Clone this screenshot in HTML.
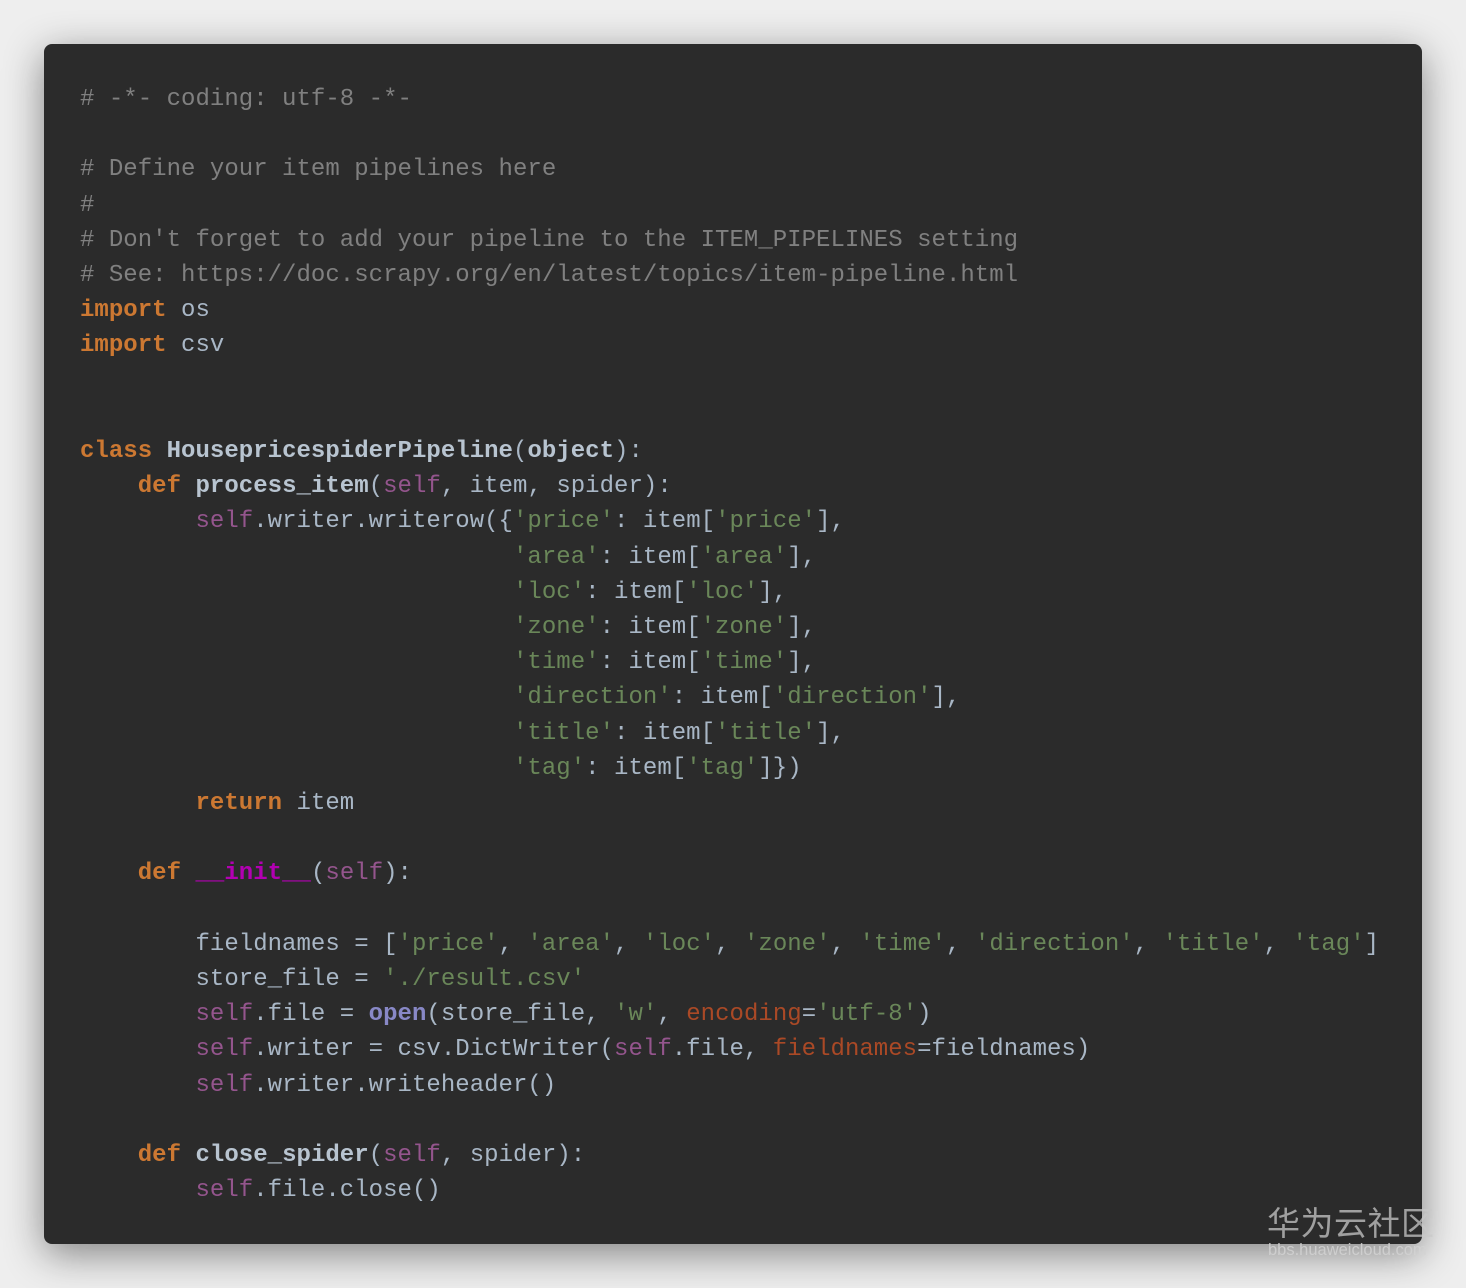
<!DOCTYPE html>
<html><head><meta charset="utf-8"><style>
html,body{margin:0;padding:0;width:1466px;height:1288px;background:#eeeeee;overflow:hidden}
.card{position:absolute;left:44px;top:44px;width:1378px;height:1200px;background:#2b2b2b;border-radius:8px;box-shadow:0 10px 40px rgba(0,0,0,.45)}
pre{position:absolute;left:80px;top:82px;margin:0;font-family:"Liberation Mono","DejaVu Sans Mono",monospace;font-size:24px;line-height:35.2px;color:#a9b7c6;letter-spacing:0.03px}
.c{color:#808080}.k{color:#cc7832;font-weight:bold}.s{color:#6a8759}.f{color:#94558d}.b{font-weight:bold;color:#b8c4d0}.m{color:#b200b2;font-weight:bold}.o{color:#8888c6;font-weight:bold}.p{color:#aa4926}
.wm{position:absolute;left:1267px;top:1203px;font-family:"Noto Sans CJK SC",sans-serif;font-size:33px;color:rgba(200,200,200,.75);line-height:36px;letter-spacing:0.5px}
.wm2{position:absolute;left:1268px;top:1241px;font-family:"Liberation Sans",sans-serif;font-size:16.5px;color:rgba(210,210,210,.85)}
</style></head><body>
<div class="card"></div>
<pre><span class="c"># -*- coding: utf-8 -*-</span>

<span class="c"># Define your item pipelines here</span>
<span class="c">#</span>
<span class="c"># Don't forget to add your pipeline to the ITEM_PIPELINES setting</span>
<span class="c"># See: https://doc.scrapy.org/en/latest/topics/item-pipeline.html</span>
<span class="k">import</span> os
<span class="k">import</span> csv


<span class="k">class</span> <span class="b">HousepricespiderPipeline</span>(<span class="b">object</span>):
    <span class="k">def</span> <span class="b">process_item</span>(<span class="f">self</span>, item, spider):
        <span class="f">self</span>.writer.writerow({<span class="s">'price'</span>: item[<span class="s">'price'</span>],
                              <span class="s">'area'</span>: item[<span class="s">'area'</span>],
                              <span class="s">'loc'</span>: item[<span class="s">'loc'</span>],
                              <span class="s">'zone'</span>: item[<span class="s">'zone'</span>],
                              <span class="s">'time'</span>: item[<span class="s">'time'</span>],
                              <span class="s">'direction'</span>: item[<span class="s">'direction'</span>],
                              <span class="s">'title'</span>: item[<span class="s">'title'</span>],
                              <span class="s">'tag'</span>: item[<span class="s">'tag'</span>]})
        <span class="k">return</span> item

    <span class="k">def</span> <span class="m">__init__</span>(<span class="f">self</span>):

        fieldnames = [<span class="s">'price'</span>, <span class="s">'area'</span>, <span class="s">'loc'</span>, <span class="s">'zone'</span>, <span class="s">'time'</span>, <span class="s">'direction'</span>, <span class="s">'title'</span>, <span class="s">'tag'</span>]
        store_file = <span class="s">'./result.csv'</span>
        <span class="f">self</span>.file = <span class="o">open</span>(store_file, <span class="s">'w'</span>, <span class="p">encoding</span>=<span class="s">'utf-8'</span>)
        <span class="f">self</span>.writer = csv.DictWriter(<span class="f">self</span>.file, <span class="p">fieldnames</span>=fieldnames)
        <span class="f">self</span>.writer.writeheader()

    <span class="k">def</span> <span class="b">close_spider</span>(<span class="f">self</span>, spider):
        <span class="f">self</span>.file.close()</pre>
<div class="wm">华为云社区</div>
<div class="wm2">bbs.huaweicloud.com</div>
</body></html>
